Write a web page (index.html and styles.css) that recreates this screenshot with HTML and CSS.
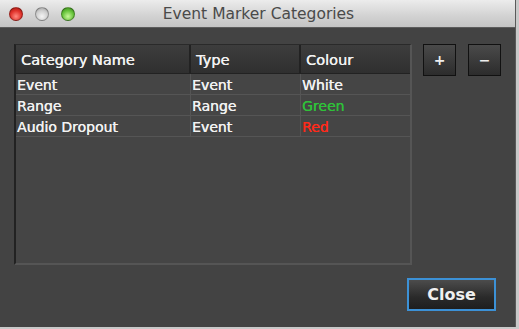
FILE: index.html
```html
<!DOCTYPE html>
<html lang="en">
<head>
    <meta charset="UTF-8">
    <title>Event Marker Categories</title>
    <link rel="stylesheet" href="styles.css">
</head>
<body>
    <div class="window">
        <div class="titlebar">
            <div class="lights">
                <span class="light red"></span>
                <span class="light grey"></span>
                <span class="light green"></span>
            </div>
            <div class="title">Event Marker Categories</div>
        </div>
        <div class="content">
            <div class="main">
                <div class="table">
                    <div class="row head">
                        <div class="cell c1">Category Name</div>
                        <div class="cell c2">Type</div>
                        <div class="cell c3">Colour</div>
                    </div>
                    <div class="row">
                        <div class="cell c1">Event</div>
                        <div class="cell c2">Event</div>
                        <div class="cell c3">White</div>
                    </div>
                    <div class="row">
                        <div class="cell c1">Range</div>
                        <div class="cell c2">Range</div>
                        <div class="cell c3 green-text">Green</div>
                    </div>
                    <div class="row">
                        <div class="cell c1">Audio Dropout</div>
                        <div class="cell c2">Event</div>
                        <div class="cell c3 red-text">Red</div>
                    </div>
                </div>
                <div class="tools">
                    <button class="tool">+</button>
                    <button class="tool">&minus;</button>
                </div>
            </div>
            <div class="footer">
                <button class="close">Close</button>
            </div>
        </div>
    </div>
</body>
</html>
```

FILE: styles.css
```css
* {
    box-sizing: border-box;
    margin: 0;
    padding: 0;
    font-family: 'DejaVu Sans', sans-serif;
}

body {
    width: 519px;
    height: 329px;
    background: #c9c9c9;
    overflow: hidden;
}

.window {
    width: 516px;
    height: 327px;
    background: #434343;
    border-right: 1px solid #5a5a5a;
    display: flex;
    flex-direction: column;
}

.titlebar {
    height: 28px;
    background: linear-gradient(#ececec, #d2d2d2 60%, #c4c4c4);
    border-bottom: 1px solid #5c5c5c;
    position: relative;
    display: flex;
    align-items: center;
    justify-content: center;
}

.lights {
    position: absolute;
    left: 9px;
    top: 7px;
    display: flex;
    gap: 12px;
}

.light {
    width: 14px;
    height: 14px;
    border-radius: 50%;
    border: 1px solid rgba(0, 0, 0, 0.3);
}

.light.red {
    background: radial-gradient(circle at 50% 70%, #ff8a80, #e0312a 55%, #9e1810);
}

.light.grey {
    background: radial-gradient(circle at 50% 70%, #f4f4f4, #cfcfcf 55%, #999);
}

.light.green {
    background: radial-gradient(circle at 50% 70%, #c8f79a, #66c33a 55%, #357d1a);
}

.title {
    font-size: 15.5px;
    color: #4a4a4a;
    padding-left: 2px;
}

.content {
    flex: 1;
    display: flex;
    flex-direction: column;
    padding: 16px 0 0 14px;
}

.main {
    display: flex;
    gap: 11px;
}

.table {
    width: 398px;
    height: 221px;
    background: #454545;
    border-left: 2px solid #222;
    border-top: 1px solid #2a2a2a;
    border-right: 2px solid #555;
    border-bottom: 2px solid #555;
}

.row {
    display: flex;
    height: 21px;
    border-bottom: 1px solid #555;
    font-size: 14px;
    color: #f2f2f2;
    text-shadow: 0.3px 0 0 currentColor;
}

.row.head {
    height: 29px;
    border-bottom: 1px solid #222;
    background: linear-gradient(#3d3d3d, #2f2f2f);
    font-size: 14.5px;
}

.cell {
    display: flex;
    align-items: center;
    padding: 1px 0 0 1px;
    border-right: 1px solid #555;
    white-space: nowrap;
}

.head .cell {
    padding-left: 5px;
    border-right: 2px solid #222;
}

.c1 {
    width: 175px;
}

.c2 {
    width: 110px;
}

.c3 {
    flex: 1;
    border-right: none;
}

.head .c3 {
    border-right: none;
}

.green-text {
    color: #2fc139;
}

.red-text {
    color: #ff2a1a;
}

.tools {
    display: flex;
    gap: 12px;
}

.tool {
    width: 33px;
    height: 32px;
    border: 1px solid #111;
    background: linear-gradient(#4a4a4a, #2c2c2c);
    color: #eee;
    font-size: 14px;
    font-weight: bold;
}

.footer {
    display: flex;
    justify-content: flex-end;
    padding: 13px 19px 0 0;
}

.close {
    width: 89px;
    height: 33px;
    border: 2px solid #3c91d6;
    background: linear-gradient(#4c4c4c, #2a2a2a 60%, #1e1e1e);
    color: #f0f0f0;
    font-size: 16px;
    font-weight: bold;
}
```
